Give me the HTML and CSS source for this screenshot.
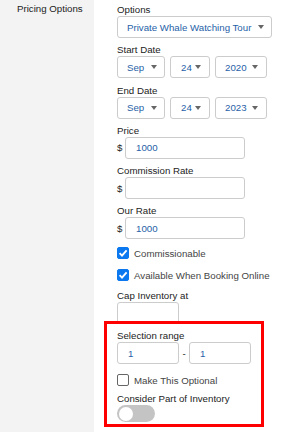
FILE: index.html
```html
<!DOCTYPE html>
<html>
<head>
<meta charset="utf-8">
<link rel="stylesheet" href="styles.css">
</head>
<body>
<div class="page">
  <aside class="side">Pricing Options</aside>
  <main class="main">
    <div class="field">
      <div class="label">Options</div>
      <div class="select wide"><span>Private Whale Watching Tour</span><i class="caret"></i></div>
    </div>
    <div class="field">
      <div class="label">Start Date</div>
      <div class="row">
        <div class="select w-mon"><span>Sep</span><i class="caret"></i></div>
        <div class="select w-day"><span>24</span><i class="caret"></i></div>
        <div class="select w-year"><span>2020</span><i class="caret"></i></div>
      </div>
    </div>
    <div class="field">
      <div class="label">End Date</div>
      <div class="row">
        <div class="select w-mon"><span>Sep</span><i class="caret"></i></div>
        <div class="select w-day"><span>24</span><i class="caret"></i></div>
        <div class="select w-year"><span>2023</span><i class="caret"></i></div>
      </div>
    </div>
    <div class="field">
      <div class="label">Price</div>
      <div class="money"><span class="cur">$</span><div class="input w-money">1000</div></div>
    </div>
    <div class="field">
      <div class="label">Commission Rate</div>
      <div class="money"><span class="cur">$</span><div class="input w-money"></div></div>
    </div>
    <div class="field">
      <div class="label">Our Rate</div>
      <div class="money"><span class="cur">$</span><div class="input w-money">1000</div></div>
    </div>
    <div class="check first"><span class="box on"><svg viewBox="0 0 12 12" width="12" height="12"><path d="M2.6 6.2 L5 8.6 L9.6 3.4" fill="none" stroke="#fff" stroke-width="1.9"/></svg></span><span class="ctext">Commissionable</span></div>
    <div class="check"><span class="box on"><svg viewBox="0 0 12 12" width="12" height="12"><path d="M2.6 6.2 L5 8.6 L9.6 3.4" fill="none" stroke="#fff" stroke-width="1.9"/></svg></span><span class="ctext">Available When Booking Online</span></div>
    <div class="field cap">
      <div class="label">Cap Inventory at</div>
      <div class="input w-small"></div>
    </div>
    <section class="highlight">
      <div class="label">Selection range</div>
      <div class="range">
        <div class="input w-small">1</div>
        <span class="dash">-</span>
        <div class="input w-small">1</div>
      </div>
      <div class="check opt"><span class="box"></span><span class="ctext">Make This Optional</span></div>
      <div class="label">Consider Part of Inventory</div>
      <div class="toggle"><span class="knob"></span></div>
    </section>
  </main>
</div>
</body>
</html>
```

FILE: styles.css
```css
html, body {
  margin: 0;
  padding: 0;
  background: #fff;
}
body {
  font-family: "Liberation Sans", Arial, sans-serif;
  font-size: 9.7px;
  color: #222;
  height: 432px;
  overflow: hidden;
}
.page {
  display: flex;
  height: 432px;
}
.side {
  width: 94px;
  flex: none;
  background: #f3f3f3;
  box-sizing: border-box;
  padding: 3px 0 0 17px;
  line-height: 12px;
  color: #222;
}
.main {
  flex: 1;
  padding: 4px 0 0 23px;
  display: flex;
  flex-direction: column;
  align-items: flex-start;
}
.field {
  margin-bottom: 6.3px;
}
.label {
  line-height: 12px;
  height: 12px;
  color: #222;
}
.row {
  display: flex;
  gap: 5px;
}
.select {
  box-sizing: border-box;
  height: 22px;
  border: 1px solid #ccc;
  border-radius: 3px;
  display: flex;
  align-items: center;
  justify-content: space-between;
  padding: 0 7px 0 9px;
  color: #1f5fa8;
  background: #fff;
}
.wide { width: 155px; }
.w-mon { width: 48px; }
.w-day { width: 40px; padding-left: 10px; padding-right: 8px; }
.w-year { width: 52px; padding-left: 9px; padding-right: 8px; }
.caret {
  width: 0;
  height: 0;
  border-left: 3.5px solid transparent;
  border-right: 3.5px solid transparent;
  border-top: 4px solid #666;
}
.money {
  display: flex;
  align-items: center;
}
.cur {
  width: 8px;
  color: #222;
}
.input {
  box-sizing: border-box;
  height: 22px;
  border: 1px solid #ccc;
  border-radius: 3px;
  display: flex;
  align-items: center;
  padding-left: 10px;
  color: #1f5fa8;
  background: #fff;
}
.w-money { width: 120px; }
.w-small { width: 62px; }
.check {
  display: flex;
  align-items: center;
  height: 12px;
  margin-bottom: 10px;
}
.check.first { margin-top: 1.5px; }
.box {
  box-sizing: border-box;
  width: 12px;
  height: 12px;
  border: 1px solid #666;
  border-radius: 2px;
  background: #fff;
  margin-right: 5px;
  flex: none;
  display: flex;
}
.box.on {
  background: #0b78f0;
  border-color: #0b78f0;
}
.box svg { margin: -1px; }
.ctext { color: #444; }
.cap { margin-bottom: 0; margin-top: -1px; }
.highlight {
  box-sizing: border-box;
  width: 160px;
  height: 106px;
  border: 3px solid #f00;
  margin: -3px 0 0 -13px;
  padding: 6px 0 0 10px;
  position: relative;
  background: transparent;
}
.range {
  display: flex;
  align-items: center;
  margin-bottom: 10px;
}
.dash {
  width: 10px;
  text-align: center;
  color: #222;
}
.check.opt { margin-bottom: 7px; }
.toggle {
  width: 38px;
  height: 17px;
  border-radius: 9px;
  background: #c4c4c4;
  display: flex;
  align-items: center;
  padding-left: 1.5px;
  box-sizing: border-box;
}
.knob {
  width: 14px;
  height: 14px;
  border-radius: 50%;
  background: #fff;
}
```
